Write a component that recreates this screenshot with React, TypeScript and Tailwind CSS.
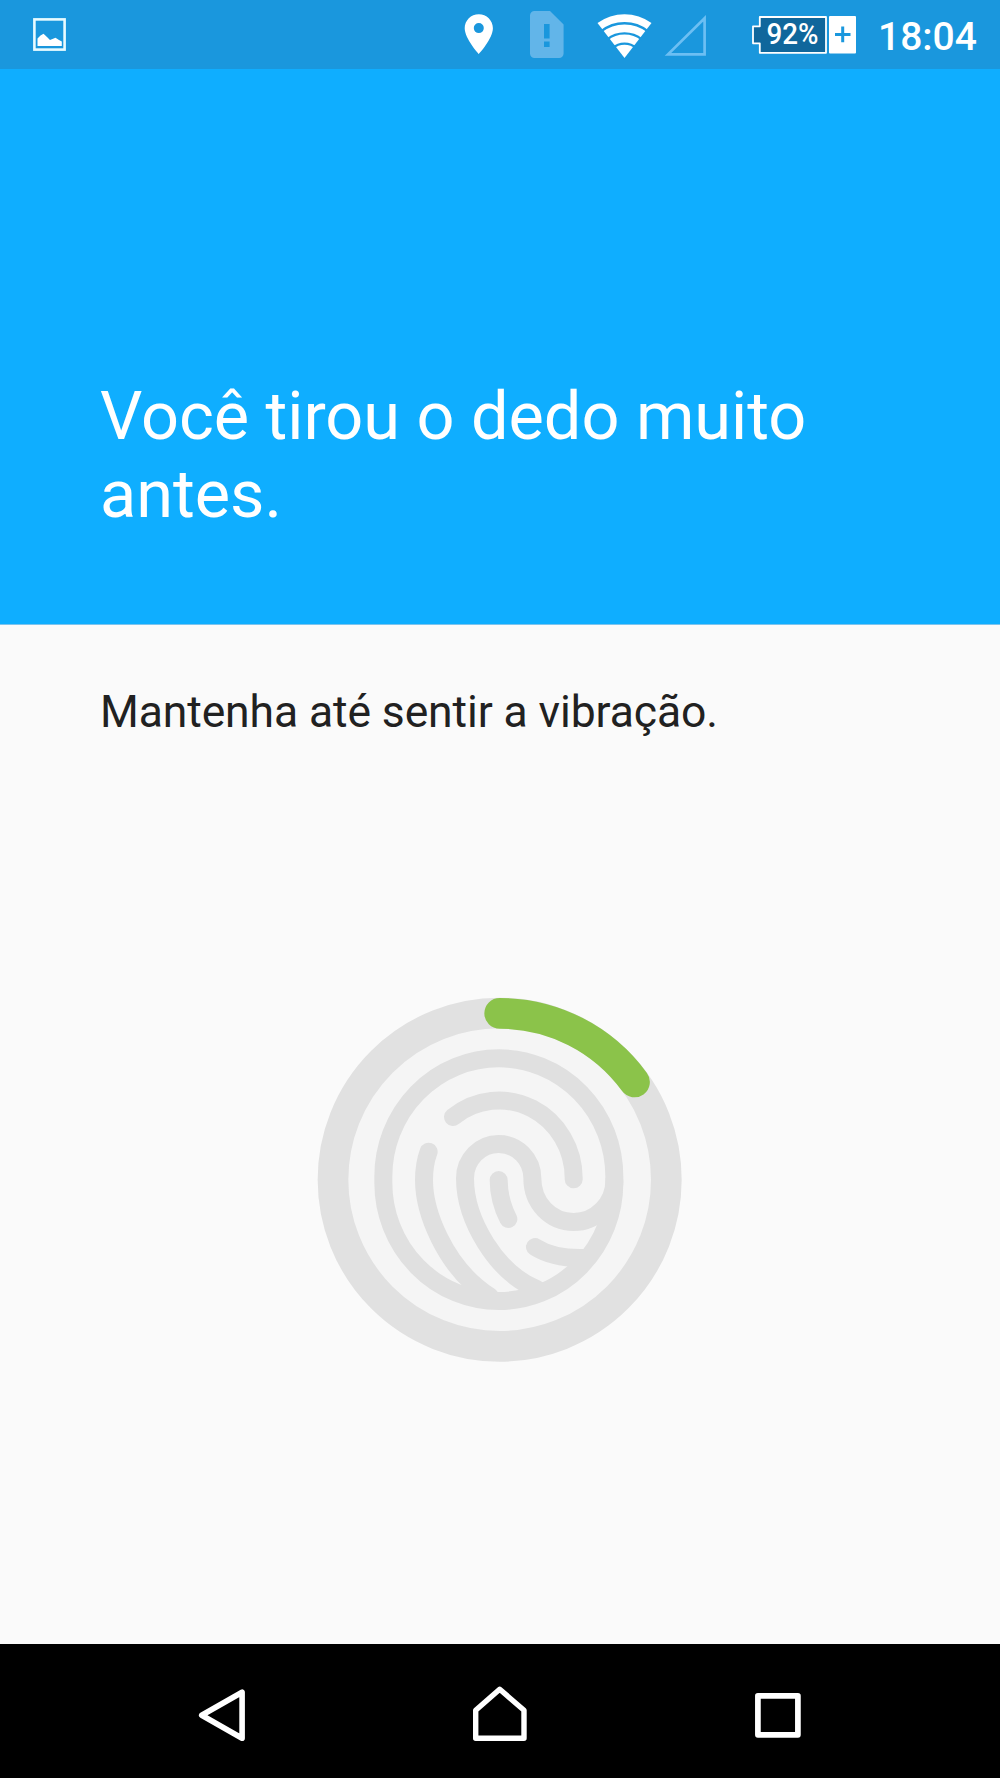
const TITLE = 'Você tirou o dedo muito antes.';
const MESSAGE = 'Mantenha até sentir a vibração.';

function PictureIcon() {
  return (
    <svg className="h-[33px] w-[33px]" viewBox="0 0 33 33" fill="none">
      <rect x="1.4" y="1.4" width="30.2" height="30.2" stroke="#e8fbff" strokeWidth="2.6" />
      <path d="M4.5 28V20.5L7.5 17.5L10.5 15.8L14 19L17 22L22.5 19.8L26 22L28.8 23.5V28Z" fill="#fff" />
    </svg>
  );
}

function PinIcon() {
  return (
    <svg className="h-[41px] w-[30px]" viewBox="0 0 30 41">
      <path
        fillRule="evenodd"
        fill="#fff"
        d="M14.8 .2C7 .2 .7 6.4 .7 14.2C.7 24.6 14.8 40 14.8 40S28.9 24.6 28.9 14.2C28.9 6.4 22.6 .2 14.8 .2ZM14.8 9.1A5 5 0 0 1 14.8 19.1A5 5 0 0 1 14.8 9.1Z"
      />
    </svg>
  );
}

function SimAlertIcon() {
  return (
    <svg className="h-[47px] w-[34px]" viewBox="0 0 34 47">
      <path
        fillRule="evenodd"
        fill="#62b5e9"
        d="M4.5 0H20L33.6 13.4V42.5A4.5 4.5 0 0 1 29 47H4.5A4.5 4.5 0 0 1 0 42.5V4.5A4.5 4.5 0 0 1 4.5 0ZM14 13V27.6H19.6V13ZM14 30.4V36H19.6V30.4Z"
      />
    </svg>
  );
}

function WifiIcon() {
  return (
    <svg className="h-[46px] w-[56px]" viewBox="0 0 56 46" fill="none">
      <path d="M27.5 45L.5 10A46 46 0 0 1 54.5 10Z" fill="#fff" />
      <g stroke="#1a97dd" strokeWidth="2.3">
        <path d="M4 18.4A38 38 0 0 1 51 18.4" />
        <path d="M10 26.6A28 28 0 0 1 45 26.6" />
        <path d="M15.5 35.2A18 18 0 0 1 39.5 35.2" />
      </g>
    </svg>
  );
}

function SignalIcon() {
  return (
    <svg className="h-[43px] w-[43px]" viewBox="0 0 43 43" fill="none">
      <path d="M4 40.3H40.6V4.2Z" stroke="#6cbff3" strokeWidth="2.7" />
    </svg>
  );
}

function Battery({ level }: { level: string }) {
  return (
    <svg className="h-[38px] w-[104px]" viewBox="0 0 104 38">
      <path
        d="M7.8 1H74V36.8H7.8V27.3H1V10.3H7.8Z"
        fill="#10679c"
        stroke="#fff"
        strokeWidth="1.8"
        strokeLinejoin="round"
      />
      <rect x="77" y="0" width="27" height="37.6" rx="1" fill="#fff" />
      <path d="M83 18.4H98.5M90.7 10.4V26.2" stroke="#1a97dd" strokeWidth="3" />
      <text
        x="14.5"
        y="28.4"
        fill="#fff"
        className="font-[Roboto,sans-serif] text-[29px] font-medium"
        textLength="52"
        lengthAdjust="spacingAndGlyphs"
      >
        {level}
      </text>
    </svg>
  );
}

function StatusBar() {
  return (
    <div className="flex h-[69px] shrink-0 items-center bg-[#1a97dd] pr-[23px] pl-[33px]">
      <PictureIcon />
      <div className="ml-auto flex items-center">
        <PinIcon />
        <div className="ml-9">
          <SimAlertIcon />
        </div>
        <div className="ml-[33px] pt-0.5">
          <WifiIcon />
        </div>
        <div className="ml-[11px] pt-0.5">
          <SignalIcon />
        </div>
        <div className="ml-[45px]">
          <Battery level="92%" />
        </div>
        <span className="ml-[22px] w-[99px] pt-[5px] text-[39px] leading-[46px] font-medium whitespace-nowrap text-white">
          18:04
        </span>
      </div>
    </div>
  );
}

function FingerprintProgress() {
  return (
    <svg className="h-[400px] w-[400px]" viewBox="0 0 1200 1200" fill="none">
      <circle cx="599" cy="599" r="500" fill="#f5f5f5" stroke="#e1e1e1" strokeWidth="92" />
      <g stroke="#e0e0e0" strokeWidth="54" strokeLinecap="round">
        <path d="M250 590A346.5 355 0 0 1 943 590V608A346.5 355 0 0 1 250 608Z" />
        <path d="M459 411A224 233 0 0 1 821 598" />
        <path d="M386 515Q372 553 372 600C372 690 430 860 570 950" />
        <path d="M712 928C590 880 495 720 495 595A101 103 0 0 1 697 595C697 670 752 726 821 726C888 726 943 670 943 603" />
        <path d="M705 801Q760 836 850 834" />
        <path d="M596 600Q596 660 625 717" />
      </g>
      {/* enrollment progress */}
      <path d="M599 100A500 500 0 0 1 1003.5 306" stroke="#8bc34a" strokeWidth="92" strokeLinecap="round" />
    </svg>
  );
}

function NavBar() {
  return (
    <div className="flex h-[134px] shrink-0 items-center justify-center gap-[222px] bg-black">
      <button type="button" aria-label="Voltar">
        <svg className="h-16 w-14" viewBox="0 0 56 64" fill="none" stroke="#fff" strokeWidth="5.6" strokeLinejoin="round">
          <path d="M7.7 36.2L48.1 13.2V59.2Z" />
        </svg>
      </button>
      <button type="button" aria-label="Início">
        <svg className="h-16 w-14" viewBox="0 0 56 64" fill="none" stroke="#fff" strokeWidth="5.4" strokeLinejoin="round">
          <path d="M3.7 59.3V31.2L27.7 10.3L52 31.2V59.3Z" />
        </svg>
      </button>
      <button type="button" aria-label="Recentes">
        <svg className="h-16 w-14" viewBox="0 0 56 64" fill="none" stroke="#fff" strokeWidth="5.7" strokeLinejoin="round">
          <rect x="7.9" y="16.8" width="40" height="39" />
        </svg>
      </button>
    </div>
  );
}

export default function App() {
  return (
    <div className="flex h-[1778px] w-[1000px] flex-col overflow-hidden bg-[#fafafa] font-[Roboto,sans-serif]">
      <StatusBar />
      <header className="flex h-[556px] shrink-0 flex-col justify-end border-b border-[#7cc4ee] bg-[#0faeff] px-[100px] pb-[91px]">
        <h1 className="text-[66.67px] leading-[78px] font-normal tracking-[-0.04px] text-white">{TITLE}</h1>
      </header>
      <main className="flex flex-1 flex-col px-[100px] pt-[61px]">
        <p className="text-[44.44px] leading-[52px] tracking-[-0.1px] text-[#212121]">{MESSAGE}</p>
        <div className="mt-[242px] flex justify-center">
          <FingerprintProgress />
        </div>
      </main>
      <NavBar />
    </div>
  );
}
